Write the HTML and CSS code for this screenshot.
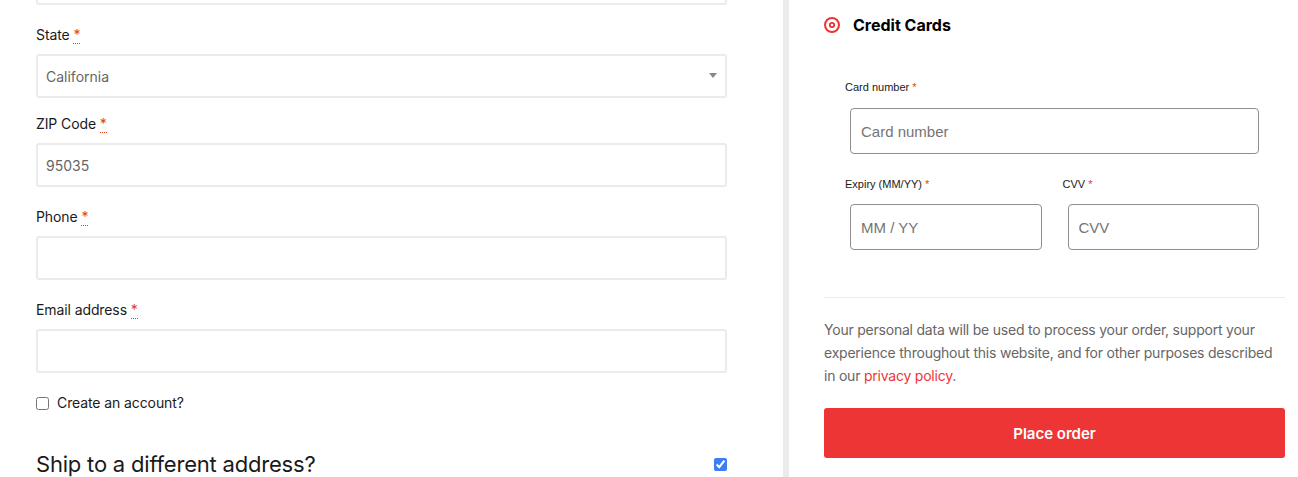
FILE: index.html
```html
<!DOCTYPE html>
<html lang="en">
<head>
<meta charset="utf-8">
<title>Checkout</title>
<link rel="stylesheet" href="styles.css">
</head>
<body>
<div class="page">
  <div class="billing">
    <div class="row">
      <input class="field" type="text" value="">
    </div>
    <div class="row row-select">
      <label class="label">State <abbr class="req" title="required">*</abbr></label>
      <div class="select">
        <span>California</span>
        <svg class="arrow" width="8" height="5" viewBox="0 0 8 5"><path d="M0 0H8L4 5Z" fill="#888"/></svg>
      </div>
    </div>
    <div class="row">
      <label class="label">ZIP Code <abbr class="req" title="required">*</abbr></label>
      <input class="field" type="text" value="95035">
    </div>
    <div class="row">
      <label class="label">Phone <abbr class="req" title="required">*</abbr></label>
      <input class="field" type="text" value="">
    </div>
    <div class="row">
      <label class="label">Email address <abbr class="req" title="required">*</abbr></label>
      <input class="field" type="text" value="">
    </div>
    <label class="check-row">
      <input class="check" type="checkbox">
      <span>Create an account?</span>
    </label>
    <div class="ship">
      <h3 class="ship-title">Ship to a different address?</h3>
      <input class="check check-blue" type="checkbox" checked>
    </div>
  </div>
  <div class="sep"></div>
  <div class="payment">
    <div class="method">
      <svg class="radio" width="16" height="16" viewBox="0 0 16 16">
        <circle cx="8" cy="8" r="7" fill="none" stroke="#ee3536" stroke-width="2"/>
        <circle cx="8" cy="8" r="2.2" fill="none" stroke="#ee3536" stroke-width="1.8"/>
      </svg>
      <span class="method-name">Credit Cards</span>
    </div>
    <div class="card-box">
      <div class="card-field">
        <div class="card-label">Card number <span class="card-req">*</span></div>
        <input class="card-input" type="text" placeholder="Card number">
      </div>
      <div class="card-cols">
        <div class="card-field">
          <div class="card-label">Expiry (MM/YY) <span class="card-req">*</span></div>
          <input class="card-input" type="text" placeholder="MM / YY">
        </div>
        <div class="card-field">
          <div class="card-label">CVV <span class="card-req">*</span></div>
          <input class="card-input" type="text" placeholder="CVV">
        </div>
      </div>
    </div>
    <div class="divider"></div>
    <p class="privacy">Your personal data will be used to process your order, support your<br>experience throughout this website, and for other purposes described<br>in our <a class="link" href="#">privacy policy</a>.</p>
    <button class="place" type="button">Place order</button>
  </div>
</div>
</body>
</html>
```

FILE: styles.css
```css
html, body {
  margin: 0;
  padding: 0;
  background: #fff;
}
body {
  font-family: Inter, "Noto Sans", Arial, sans-serif;
  color: #1a1a1a;
  overflow: hidden;
}
.page {
  display: flex;
  height: 477px;
  padding-left: 36px;
  overflow: hidden;
}
.billing {
  width: 691px;
  flex: none;
  margin-top: -39px;
}
.row {
  margin-bottom: 20px;
}
.row-select {
  margin-bottom: 16px;
}
.label {
  display: block;
  font-size: 14px;
  line-height: 20px;
  margin-bottom: 9px;
  color: #1a1a1a;
  letter-spacing: -0.1px;
}
.req {
  color: #e2401c;
  text-decoration: none;
  border-bottom: 1px dotted #e2401c;
  font-weight: 400;
}
.field, .select {
  box-sizing: border-box;
  display: block;
  width: 100%;
  height: 44px;
  border: 2px solid #ebebeb;
  border-radius: 3px;
  padding: 0 8px;
  font-family: inherit;
  font-size: 14px;
  color: #666;
  background: #fff;
  outline: none;
}
.select {
  display: flex;
  align-items: center;
  justify-content: space-between;
  padding: 0 8px 0 8px;
}
.arrow {
  margin-right: 0;
  margin-top: -2px;
}
.check-row {
  display: flex;
  align-items: center;
  gap: 8px;
  font-size: 14px;
  line-height: 20px;
  color: #1a1a1a;
  margin-top: 19px;
  letter-spacing: -0.1px;
}
.check {
  margin: 0;
  width: 13px;
  height: 13px;
}
.ship {
  display: flex;
  align-items: center;
  justify-content: space-between;
  margin-top: 36px;
}
.ship-title {
  margin: 0;
  font-size: 22px;
  font-weight: 400;
  line-height: 30px;
  color: #1a1a1a;
  letter-spacing: -0.2px;
}
.check-blue {
  accent-color: #3c7cf4;
}
.sep {
  flex: none;
  width: 6px;
  margin-left: 56px;
  background: #ebebeb;
}
.payment {
  flex: none;
  width: 461px;
  padding-left: 35px;
}
.method {
  display: flex;
  align-items: center;
  gap: 13px;
  padding-top: 15px;
  height: 20px;
}
.radio {
  flex: none;
}
.method-name {
  font-size: 16px;
  font-weight: 700;
  line-height: 20px;
  color: #000;
}
.card-box {
  margin-top: 42px;
  margin-left: 21px;
  width: 419px;
}
.card-field {
  display: flex;
  flex-direction: column;
}
.card-label {
  font-family: "Liberation Sans", Arial, sans-serif;
  font-size: 11px;
  line-height: 20px;
  color: #1a1a1a;
  margin-bottom: 11px;
}
.card-req {
  color: #e53935;
}
.card-input {
  box-sizing: border-box;
  margin-left: 5px;
  width: calc(100% - 10px);
  height: 46px;
  border: 1px solid #8f8f8f;
  border-radius: 4px;
  padding: 0 10px;
  font-family: "Liberation Sans", Arial, sans-serif;
  font-size: 15px;
  color: #333;
  outline: none;
}
.card-input::placeholder {
  color: #757575;
}
.card-cols {
  display: grid;
  grid-template-columns: 1fr 1fr;
  column-gap: 16px;
  margin-top: 20px;
}
.card-cols .card-label {
  margin-bottom: 10px;
}
.divider {
  height: 1px;
  background: #ebebeb;
  margin-top: 47px;
}
.privacy {
  margin: 20px 0 0;
  font-size: 14px;
  line-height: 23px;
  color: #666;
  letter-spacing: -0.22px;
  white-space: nowrap;
}
.link {
  color: #ee3536;
  text-decoration: none;
}
.place {
  display: block;
  width: 100%;
  height: 50px;
  margin-top: 21px;
  border: none;
  border-radius: 3px;
  background: #ee3536;
  color: #fff;
  font-family: inherit;
  font-size: 15px;
  font-weight: 600;
  cursor: pointer;
}
```
